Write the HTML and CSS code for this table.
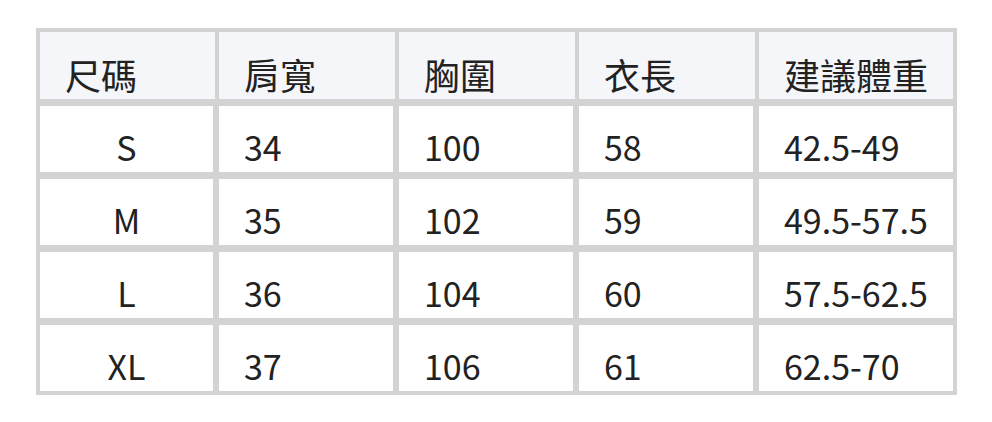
FILE: index.html
```html
<!DOCTYPE html>
<html lang="zh-Hant">
<head>
<meta charset="utf-8">
<title>尺碼表</title>
<link rel="stylesheet" href="styles.css">
</head>
<body>
<div class="page">
  <table class="size-table">
    <colgroup>
      <col class="c1"><col class="c2"><col class="c3"><col class="c4"><col class="c5">
    </colgroup>
    <thead>
      <tr><th>尺碼</th><th>肩寬</th><th>胸圍</th><th>衣長</th><th>建議體重</th></tr>
    </thead>
    <tbody>
      <tr><td class="size">S</td><td>34</td><td>100</td><td>58</td><td>42.5-49</td></tr>
      <tr><td class="size">M</td><td>35</td><td>102</td><td>59</td><td>49.5-57.5</td></tr>
      <tr><td class="size">L</td><td>36</td><td>104</td><td>60</td><td>57.5-62.5</td></tr>
      <tr><td class="size">XL</td><td>37</td><td>106</td><td>61</td><td>62.5-70</td></tr>
    </tbody>
  </table>
</div>
</body>
</html>
```

FILE: styles.css
```css
html, body {
  margin: 0;
  padding: 0;
  background: #ffffff;
}
.page {
  padding: 28px 0 0 36px;
}
.size-table {
  box-sizing: border-box;
  width: 921px;
  table-layout: fixed;
  border-collapse: separate;
  border-spacing: 0;
  border: 4px solid #d3d3d3;
  font-family: "Noto Sans CJK TC", "Noto Sans", sans-serif;
  font-size: 36px;
  line-height: 36px;
  color: #222222;
}
.c1 { width: 179px; }
.c2, .c3, .c4 { width: 180px; }
.c5 { width: 194px; }
.size-table th,
.size-table td {
  box-sizing: content-box;
  padding: 0 0 0 25px;
  text-align: left;
  vertical-align: bottom;
  font-weight: 400;
  white-space: nowrap;
}
.size-table th {
  background: #f5f6fa;
  height: 60px;
  padding-bottom: 7px;
  border-right: 4px solid #d3d3d3;
}
.size-table td {
  background: #ffffff;
  font-size: 34px;
  height: 59px;
  padding-bottom: 7px;
  border-top: 7px solid #d3d3d3;
  border-right: 6px solid #d3d3d3;
}
.size-table th:last-child,
.size-table td:last-child {
  border-right: 0;
}
.size-table td.size {
  text-align: center;
  padding-left: 0;
}
```
